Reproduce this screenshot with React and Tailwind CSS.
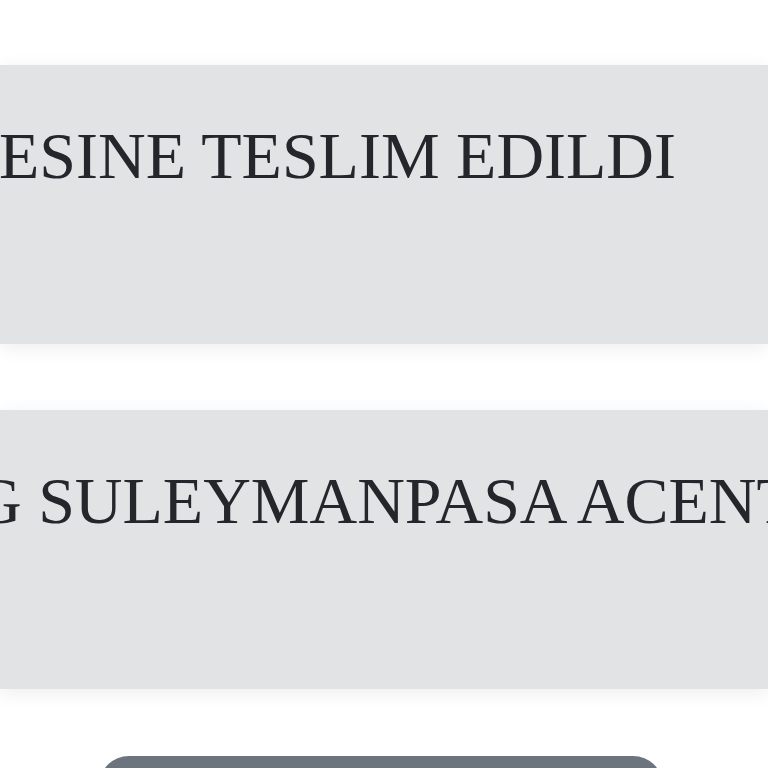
import React from 'react';

const rows = [
  { text: 'ESINE TESLIM EDILDI', shift: '-ml-[1px]' },
  { text: 'G SULEYMANPASA ACENTESINDE', shift: '-ml-[26px]' },
];

export default function App() {
  return (
    <div className="w-[768px] h-[768px] overflow-hidden bg-white flex flex-col pt-[65px]" style={{ fontFamily: '"Liberation Serif", "Times New Roman", serif' }}>
      {/* status rows */}
      <div className="flex flex-col gap-[66px]">
        {rows.map((r) => (
          <div
            key={r.text}
            className="h-[279px] w-full overflow-hidden bg-[#e2e3e5] shadow-[0_4px_18px_rgba(0,0,0,0.07)] pt-[58px]"
          >
            <p className={`${r.shift} whitespace-nowrap text-[66px] leading-[66px] text-[#23262a]`}>
              {r.text}
            </p>
          </div>
        ))}
      </div>

      {/* bottom button */}
      <div className="mt-[67px] ml-[99px] w-[564px] h-[60px] shrink-0 rounded-[30px] bg-[#6c757d]" />
    </div>
  );
}
